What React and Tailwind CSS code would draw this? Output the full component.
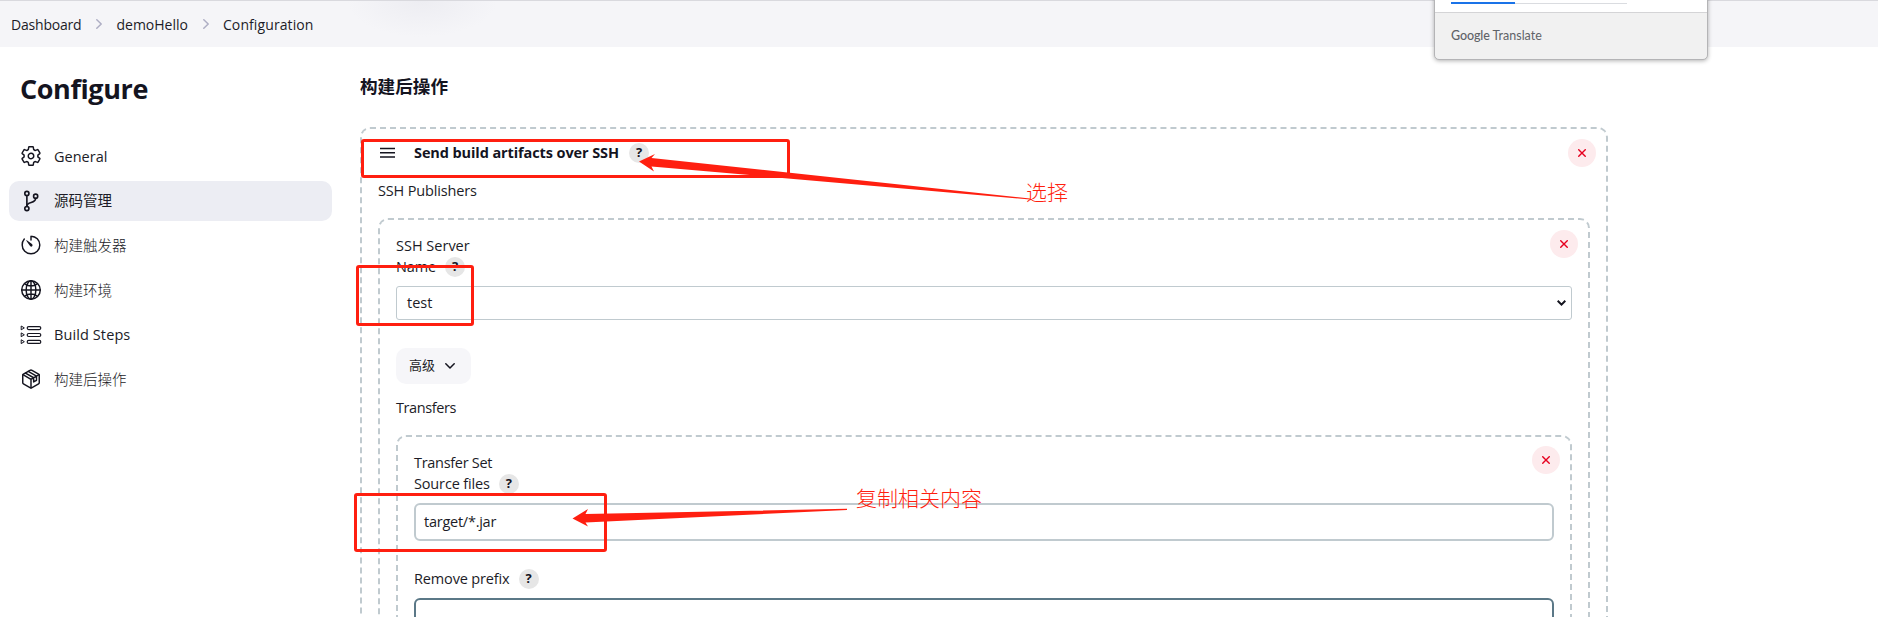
import React from "react";

const sans = "font-['Open_Sans','Noto_Sans_CJK_SC',sans-serif]";

function Help({ className = "" }) {
  return (
    <span className={`flex size-5 shrink-0 items-center justify-center rounded-full bg-[#e6e6e6] text-[13px] leading-none font-bold text-[#14141f] ${className}`}>
      ?
    </span>
  );
}

function Close({ className = "top-[10px]" }) {
  return (
    <button className={`absolute right-[10px] flex size-7 items-center justify-center rounded-full bg-[#fdebed] ${className}`}>
      <svg width="8" height="8" viewBox="0 0 8 8" fill="none" stroke="#e6001f" strokeWidth="1.4">
        <path d="M0.3 0.3 7.7 7.7M7.7 0.3 0.3 7.7" />
      </svg>
    </button>
  );
}

function Chevron() {
  return (
    <svg width="6" height="10" viewBox="0 0 6 10" fill="none" stroke="#aeaec4" strokeWidth="1.5" strokeLinecap="round" strokeLinejoin="round">
      <path d="M0.8 0.8 5.2 5 0.8 9.2" />
    </svg>
  );
}

function Icon({ children, viewBox = "0 0 512 512", strokeWidth = 34 }) {
  return (
    <svg className="size-[22px] shrink-0" viewBox={viewBox} fill="none" stroke="#14141f" strokeWidth={strokeWidth} strokeLinecap="round" strokeLinejoin="round">
      {children}
    </svg>
  );
}

const icons = {
  general: (
    <Icon>
      <path d="M262.29 192.31a64 64 0 1057.4 57.4 64.13 64.13 0 00-57.4-57.4zM416.39 256a154.34 154.34 0 01-1.53 20.79l45.21 35.46a10.81 10.81 0 012.45 13.75l-42.77 74a10.81 10.81 0 01-13.14 4.59l-44.9-18.08a16.11 16.11 0 00-15.17 1.75A164.48 164.48 0 01325 400.8a15.94 15.94 0 00-8.82 12.14l-6.73 47.89a11.08 11.08 0 01-10.68 9.17h-85.54a11.11 11.11 0 01-10.69-8.87l-6.72-47.82a16.07 16.07 0 00-9-12.22 155.3 155.3 0 01-21.46-12.57 16 16 0 00-15.11-1.71l-44.89 18.07a10.81 10.81 0 01-13.14-4.58l-42.77-74a10.8 10.8 0 012.45-13.75l38.21-30a16.05 16.05 0 006-14.08c-.36-4.17-.58-8.33-.58-12.5s.21-8.27.58-12.35a16 16 0 00-6.07-13.94l-38.19-30A10.81 10.81 0 0149.48 186l42.77-74a10.81 10.81 0 0113.14-4.59l44.9 18.08a16.11 16.11 0 0015.17-1.75A164.48 164.48 0 01187 111.2a15.94 15.94 0 008.82-12.14l6.73-47.89A11.08 11.08 0 01213.23 42h85.54a11.11 11.11 0 0110.69 8.87l6.72 47.82a16.07 16.07 0 009 12.22 155.3 155.3 0 0121.46 12.57 16 16 0 0015.11 1.71l44.89-18.07a10.81 10.81 0 0113.14 4.58l42.77 74a10.8 10.8 0 01-2.45 13.75l-38.21 30a16.05 16.05 0 00-6.05 14.08c.33 4.14.55 8.3.55 12.47z" />
    </Icon>
  ),
  branch: (
    <Icon strokeWidth={38}>
      <circle cx="160" cy="80" r="48" />
      <circle cx="160" cy="432" r="48" />
      <path d="M160 384V128" />
      <circle cx="364" cy="144" r="48" />
      <path d="M364 192c0 140-204 60-204 190" />
    </Icon>
  ),
  timer: (
    <Icon>
      <path d="M100 115A205 205 0 0051 254c-1.2 113 92 207 205 207.500 113 .2 205-92 205-205 0-112-89-202-200-205a4.36 4.36 0 00-5 4.500V142" />
      <path d="M233.38 278.63l-86-120a8.130 8.130 0 0111.320-11.320l120 86a32.5 32.5 0 01-37.250 53.260 33.210 33.210 0 01-8.070-7.940z" fill="#14141f" stroke="none" />
    </Icon>
  ),
  globe: (
    <Icon>
      <circle cx="256" cy="256" r="216" />
      <path d="M256 40c-58.07 0-112.67 97-112.67 216S197.93 472 256 472s112.67-97 112.67-216S314.07 40 256 40z" />
      <path d="M117.33 117.33c38.24 27.15 86.38 43.34 138.67 43.34s100.43-16.19 138.67-43.34M394.67 394.67c-38.24-27.15-86.38-43.34-138.67-43.34s-100.43 16.19-138.67 43.34M256 40v432M472 256H40" />
    </Icon>
  ),
  steps: (
    <Icon viewBox="0 0 22 22" strokeWidth="1.2">
      <rect x="7.2" y="2.6" width="13.600" height="3" rx="1.5" />
      <rect x="7.2" y="9.5" width="13.600" height="3" rx="1.5" />
      <rect x="7.2" y="16.4" width="13.600" height="3" rx="1.5" />
      <path strokeWidth="1" d="M1.2 2.400v3.400l2.800-1.700zM1.2 9.300v3.400l2.800-1.700zM1.2 16.200v3.400l2.800-1.700z" />
    </Icon>
  ),
  cube: (
    <Icon>
      <path d="M448 341.37V170.61A32 32 0 00432.11 143l-152-88.46a47.94 47.94 0 00-48.24 0L79.89 143A32 32 0 0064 170.61v170.76A32 32 0 0079.89 369l152 88.46a48 48 0 0048.24 0l152-88.46A32 32 0 00448 341.37z" />
      <path d="M69 153.99l187 110 187-110M256 463.99v-200M128 119l190 108v98l66-38v-98L192 81" />
    </Icon>
  ),
};

const nav = [
  ["general", "General", ""],
  ["branch", "源码管理", ""],
  ["timer", "构建触发器", "font-light"],
  ["globe", "构建环境", "font-light"],
  ["steps", "Build Steps", "tracking-[0.1px]"],
  ["cube", "构建后操作", "font-light"],
];

function RedText({ className, children }) {
  return <div className={`absolute text-[21px] leading-[24px] font-light whitespace-nowrap text-[#ff1f10] ${className}`}>{children}</div>;
}

export default function App() {
  return (
    <div className={`relative h-[617px] w-[1878px] overflow-hidden bg-white text-[14.5px] leading-[21px] text-[#1c1c27] ${sans}`}>
      <header className="flex h-[47px] items-center gap-[15px] border-t border-[#d9d9de] bg-[#f5f5f8] bg-[radial-gradient(ellipse_75px_36px_at_422px_0px,#ededf2,#f5f5f8)] pl-[11px] text-[14px]">
        <span className="tracking-[-0.2px]">Dashboard</span>
        <Chevron />
        <span className="-ml-px tracking-[0px]">demoHello</span>
        <Chevron />
        <span className="-ml-px tracking-[0.1px]">Configuration</span>
      </header>

      <div className="flex">
        <aside className="w-[360px] shrink-0 pt-[22px] pl-[9px]">
          <h1 className="pl-[11px] text-[27px] leading-[40px] font-bold tracking-[-0.4px] text-[#14141f]">Configure</h1>
          <nav className="mt-[27px] flex flex-col gap-[4.7px]">
            {nav.map(([key, label, cls]) => (
              <a key={key} className={`flex h-10 w-[323px] items-center gap-3 rounded-[10px] pl-[11px] ${key === "branch" ? "bg-[#ecedf3]" : ""}`}>
                {icons[key]}
                <span className={cls}>{label}</span>
              </a>
            ))}
          </nav>
        </aside>

        <main className="w-[1248px] pt-[26px] tracking-[-0.15px]">
          <h2 className="text-[17.6px] leading-[26px] font-bold tracking-normal text-[#14141f]">构建后操作</h2>
          <section className="relative mt-[28px] h-[600px] rounded-[10px] border-2 border-dashed border-[#c0cacf] px-4">
            <Close />
            <div className="flex h-[48px] items-center pb-px">
              <svg className="ml-[2px]" width="15" height="11" viewBox="0 0 15 11" stroke="#14141f" strokeWidth="1.5">
                <path d="M0 1.5h15M0 5.700h15M0 9.900h15" />
              </svg>
              <span className="ml-[19px] font-bold tracking-[-0.1px] text-[#14141f]">Send build artifacts over SSH</span>
              <Help className="ml-[10px]" />
            </div>
            <div className="mt-[3px] leading-[21px]">SSH Publishers</div>

            <section className="relative mt-[17px] h-[500px] rounded-[10px] border-2 border-dashed border-[#c0cacf] px-4 pt-[15px]">
              <Close />
              <div className="tracking-normal">SSH Server</div>
              <div className="flex items-center">
                <span>Name</span>
                <Help className="ml-[9px]" />
              </div>
              <div className="mt-[9px] flex h-[34px] items-center justify-between rounded-[3px] border border-[#c0cacf] pr-[5px] pb-px pl-[10px]">
                <span className="tracking-normal">test</span>
                <svg className="mt-px" width="9" height="6" viewBox="0 0 9 6" fill="none" stroke="#14141f" strokeWidth="2">
                  <path d="M0.7 0.8 4.5 4.6 8.3 0.8" />
                </svg>
              </div>
              <button className="mt-[28px] flex h-9 w-[75px] items-center gap-[10px] rounded-[10px] bg-[#f6f6f9] pl-[13px] text-[13px] tracking-normal">
                <span className="-mt-px">高级</span>
                <svg width="10" height="6" viewBox="0 0 10 6" fill="none" stroke="#14141f" strokeWidth="1.5" strokeLinecap="round" strokeLinejoin="round">
                  <path d="M0.8 0.8 5 5 9.2 0.8" />
                </svg>
              </button>
              <div className="mt-[13px] tracking-[-0.4px]">Transfers</div>

              <section className="relative mt-[17px] h-[300px] rounded-[10px] border-2 border-dashed border-[#c0cacf] px-4 pt-[15px]">
                <Close className="top-[9px]" />
                <div className="tracking-[-0.3px]">Transfer Set</div>
                <div className="flex items-center">
                  <span>Source files</span>
                  <Help className="ml-[9px]" />
                </div>
                <div className="mt-[9px] flex h-[38px] items-center rounded-[6px] border-2 border-[#c0cacf] pb-px pl-2 tracking-[-0.25px]">target/*.jar</div>
                <div className="mt-[27px] flex items-center">
                  <span>Remove prefix</span>
                  <Help className="ml-[9px]" />
                </div>
                <div className="mt-[9px] h-[38px] rounded-[6px] border-2 border-[#5b7887]" />
              </section>
            </section>
          </section>
        </main>
      </div>

      {/* Browser translate popup */}
      <div className="absolute top-[-10px] left-[1434px] h-[70px] w-[274px] overflow-hidden rounded-b-[5px] border border-[#b4b4b6] bg-[#f1f1f1] shadow-[0_1px_4px_rgba(0,0,0,0.3)]">
        <div className="h-[22px] border-b border-[#d4d4d6] bg-white pt-[11px] pl-4">
          <div className="flex h-[2px] w-[176px] items-end">
            <div className="h-[2px] w-[64px] bg-[#1a73e8]" />
            <div className="h-px flex-1 bg-[#dadce0]" />
          </div>
        </div>
        <div className="pt-[13px] pl-4 font-['Lato',sans-serif] text-[12.5px] leading-[20px] text-[#5f6368]">
          <span className="font-medium tracking-[-0.1px]">Google</span> Translate
        </div>
      </div>

      {/* Annotations */}
      <div className="absolute top-[139px] left-[361px] h-[39px] w-[429px] rounded-[3px] border-3 border-[#ff1f10]" />
      <div className="absolute top-[265px] left-[356px] h-[61px] w-[118px] rounded-[3px] border-3 border-[#ff1f10]" />
      <div className="absolute top-[493px] left-[354px] h-[59px] w-[253px] rounded-[3px] border-3 border-[#ff1f10]" />
      <svg className="absolute inset-0" width="1878" height="617" viewBox="0 0 1878 617" fill="#ff1f10">
        <path d="M639 161.5 655 154 651.5 158 1030 198.5V199.5L651.5 166.5 654 171.5z" />
        <path d="M572.5 518.5 588 509 585.5 514 847 508.7V510L585.5 522.5 588 526.5z" />
      </svg>
      <RedText className="top-[180px] left-[1026px]">选择</RedText>
      <RedText className="top-[486px] left-[856px]">复制相关内容</RedText>
    </div>
  );
}
